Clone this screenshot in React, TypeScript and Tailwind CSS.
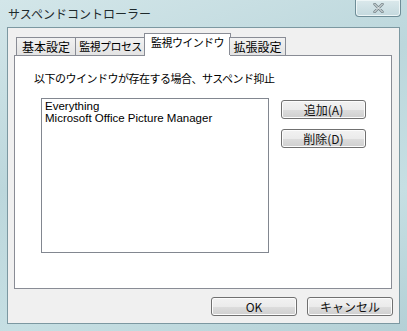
import React from 'react';

const jp = { fontFamily: '"Noto Sans CJK JP", "Noto Sans", sans-serif' };
const latin = { fontFamily: '"Liberation Sans", "Noto Sans CJK JP", sans-serif' };

function WinButton({ label, className }: { label: string; className: string }) {
  return (
    <div
      className={`flex items-center justify-center whitespace-nowrap rounded-[3px] border border-[#707070] bg-[linear-gradient(#f2f2f2_0%,#ebebeb_50%,#dddddd_51%,#cfcfcf_100%)] text-[12px] leading-none text-[#111] shadow-[inset_0_0_0_1px_#fcfcfc] ${className}`}
      style={jp}
    >
      {label}
    </div>
  );
}

export default function App() {
  const tabs = [
    { label: '基本設定', w: 'w-[60px]' },
    { label: '監視プロセス', w: 'w-[71px]' },
    { label: '監視ウインドウ', w: 'w-[87px]', active: true },
    { label: '拡張設定', w: 'w-[57px]' },
  ];

  return (
    <div className="flex h-[331px] w-[407px] flex-col bg-[linear-gradient(160deg,#d3e6e9_0%,#bcd7dc_40%,#c6dfe3_70%,#b4d0d6_100%)] px-[7px] pb-[7px]">
      {/* Title bar */}
      <div className="relative flex h-[27px] items-center pl-[1px]">
        <span className="text-[12px] text-[#1e2a2c]" style={jp}>
          サスペンドコントローラー
        </span>
        <div className="absolute -right-[1px] top-0 flex h-[17px] w-[46px] items-center justify-center rounded-b-[4px] border border-t-0 border-[#6e8d97] bg-[linear-gradient(#dbe9ec,#c4d9de)] shadow-[inset_0_0_0_1px_#eef6f7]">
          <svg width="11" height="10" viewBox="0 0 11 10">
            <path d="M1.5 1 L9.5 9 M9.5 1 L1.5 9" stroke="#7b8a8f" strokeWidth="2.6" strokeLinecap="round" />
            <path d="M1.5 1 L9.5 9 M9.5 1 L1.5 9" stroke="#f4f7f8" strokeWidth="1" strokeLinecap="round" />
          </svg>
        </div>
      </div>

      {/* Client area */}
      <div className="flex flex-1 flex-col border border-[#7c98a1] bg-[#f0f0f0] px-[6px] pt-[5px]">
        {/* Tab strip */}
        <div className="relative z-10 flex h-[22px] items-end pl-[2px]">
          {tabs.map((t, i) =>
            t.active ? (
              <div
                key={t.label}
                className={`-ml-[2px] -mr-[1px] flex h-[23px] ${t.w} -mb-px items-start justify-center whitespace-nowrap border border-b-0 border-[#898c95] bg-white pt-[3px] text-[11px] leading-none tracking-[-0.6px] text-black`}
                style={jp}
              >
                {t.label}
              </div>
            ) : (
              <div
                key={t.label}
                className={`${i > 0 ? '-ml-px' : ''} flex h-[18px] ${t.w} items-center justify-center whitespace-nowrap border border-b-0 border-[#898c95] bg-[linear-gradient(#f2f2f2,#e3e3e3)] ${i === 1 ? 'text-[11px] tracking-[-0.6px]' : 'text-[12px]'} leading-none text-black`}
                style={jp}
              >
                {t.label}
              </div>
            )
          )}
        </div>

        {/* Tab panel */}
        <div className="flex h-[234px] w-[378px] flex-col border border-[#898c95] bg-white pl-[19px] pt-[15px]">
          <div className="whitespace-nowrap text-[11px] leading-[14px] tracking-[-0.5px] text-black" style={jp}>
            以下のウインドウが存在する場合、サスペンド抑止
          </div>
          <div className="mt-[13px] flex pl-[7px]">
            <div className="h-[155px] w-[228px] border border-[#828790] bg-white px-[3px] pt-[1px]">
              <div className="text-[11.5px] leading-[12px] text-black" style={latin}>
                Everything
              </div>
              <div className="text-[11.5px] leading-[12px] text-black" style={latin}>
                Microsoft Office Picture Manager
              </div>
            </div>
            <div className="ml-[12px] mt-[2px] flex flex-col gap-[10px]">
              <WinButton label="追加(A)" className="h-[19px] w-[85px]" />
              <WinButton label="削除(D)" className="h-[19px] w-[85px]" />
            </div>
          </div>
        </div>

        {/* Bottom buttons */}
        <div className="mt-[8px] flex justify-end gap-[10px]">
          <WinButton label="OK" className="h-[19px] w-[86px]" />
          <WinButton label="キャンセル" className="h-[19px] w-[86px]" />
        </div>
      </div>
    </div>
  );
}
